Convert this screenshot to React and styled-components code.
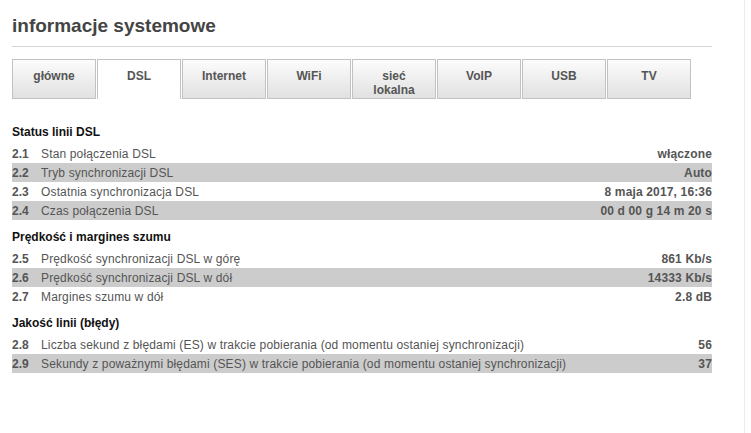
import styled, { createGlobalStyle } from 'styled-components'

const GlobalStyle = createGlobalStyle`
    html, body {
        margin: 0;
        padding: 0;
        background: #ffffff;
    }
    body {
        font-family: "Liberation Sans", Arial, sans-serif;
    }
`

const tabs = ['główne', 'DSL', 'Internet', 'WiFi', 'sieć\nlokalna', 'VoIP', 'USB', 'TV']

const sections = [
    {
        title: 'Status linii DSL',
        rows: [
            ['2.1', 'Stan połączenia DSL', 'włączone'],
            ['2.2', 'Tryb synchronizacji DSL', 'Auto'],
            ['2.3', 'Ostatnia synchronizacja DSL', '8 maja 2017, 16:36'],
            ['2.4', 'Czas połączenia DSL', '00 d 00 g 14 m 20 s'],
        ],
    },
    {
        title: 'Prędkość i margines szumu',
        rows: [
            ['2.5', 'Prędkość synchronizacji DSL w górę', '861 Kb/s'],
            ['2.6', 'Prędkość synchronizacji DSL w dół', '14333 Kb/s'],
            ['2.7', 'Margines szumu w dół', '2.8 dB'],
        ],
    },
    {
        title: 'Jakość linii (błędy)',
        rows: [
            ['2.8', 'Liczba sekund z błędami (ES) w trakcie pobierania (od momentu ostaniej synchronizacji)', '56'],
            ['2.9', 'Sekundy z poważnymi błędami (SES) w trakcie pobierania (od momentu ostaniej synchronizacji)', '37'],
        ],
    },
]

const App = () => {
    return (
        <Page>
            <GlobalStyle />
            <Content>
                <Title>informacje systemowe</Title>
                <TabBar>
                    {tabs.map((t) => (
                        <Tab key={t} active={t === 'DSL'}>
                            {t}
                        </Tab>
                    ))}
                </TabBar>
                {sections.map((s, i) => (
                    <Section key={s.title} first={i === 0}>
                        <SectionTitle>{s.title}</SectionTitle>
                        {s.rows.map(([num, label, value], j) => (
                            <Row key={num} shaded={j % 2 === 1}>
                                <Num>{num}</Num>
                                <Label>{label}</Label>
                                <Value>{value}</Value>
                            </Row>
                        ))}
                    </Section>
                ))}
            </Content>
        </Page>
    )
}

const Page = styled.div`
    width: 745px;
    min-height: 433px;
    border-right: 1px solid #ececec;
    box-sizing: border-box;
`

const Content = styled.div`
    width: 700px;
    padding: 14px 0 0 12px;
`

const Title = styled.h1`
    margin: 0;
    padding-bottom: 9px;
    font-size: 19px;
    line-height: 23px;
    font-weight: bold;
    color: #444444;
    border-bottom: 1px solid #d4d4d4;
`

const TabBar = styled.div`
    display: flex;
    gap: 1px;
    margin-top: 12px;
`

const Tab = styled.div`
    width: 84px;
    height: 40px;
    box-sizing: border-box;
    padding-top: 9px;
    border: 1px solid #c2c2c2;
    border-bottom: ${(p) => (p.active ? 'none' : '1px solid #c2c2c2')};
    background: ${(p) => (p.active ? '#ffffff' : 'linear-gradient(#fcfcfc, #e1e1e1)')};
    font-size: 12px;
    line-height: 14px;
    font-weight: bold;
    color: #555555;
    text-align: center;
    white-space: pre-line;
`

const Section = styled.div`
    margin-top: ${(p) => (p.first ? '24px' : '8px')};
`

const SectionTitle = styled.div`
    height: 19px;
    line-height: 19px;
    margin-bottom: 2px;
    font-size: 12px;
    font-weight: bold;
    color: #111111;
`

const Row = styled.div`
    display: flex;
    align-items: center;
    height: 19px;
    background: ${(p) => (p.shaded ? '#cccccc' : 'transparent')};
    font-size: 12px;
    color: #555555;
    letter-spacing: 0.15px;
`

const Num = styled.span`
    width: 29px;
    font-weight: bold;
    letter-spacing: 0;
`

const Label = styled.span`
    flex: 1;
`

const Value = styled.span`
    font-weight: bold;
    text-align: right;
`

export default App
